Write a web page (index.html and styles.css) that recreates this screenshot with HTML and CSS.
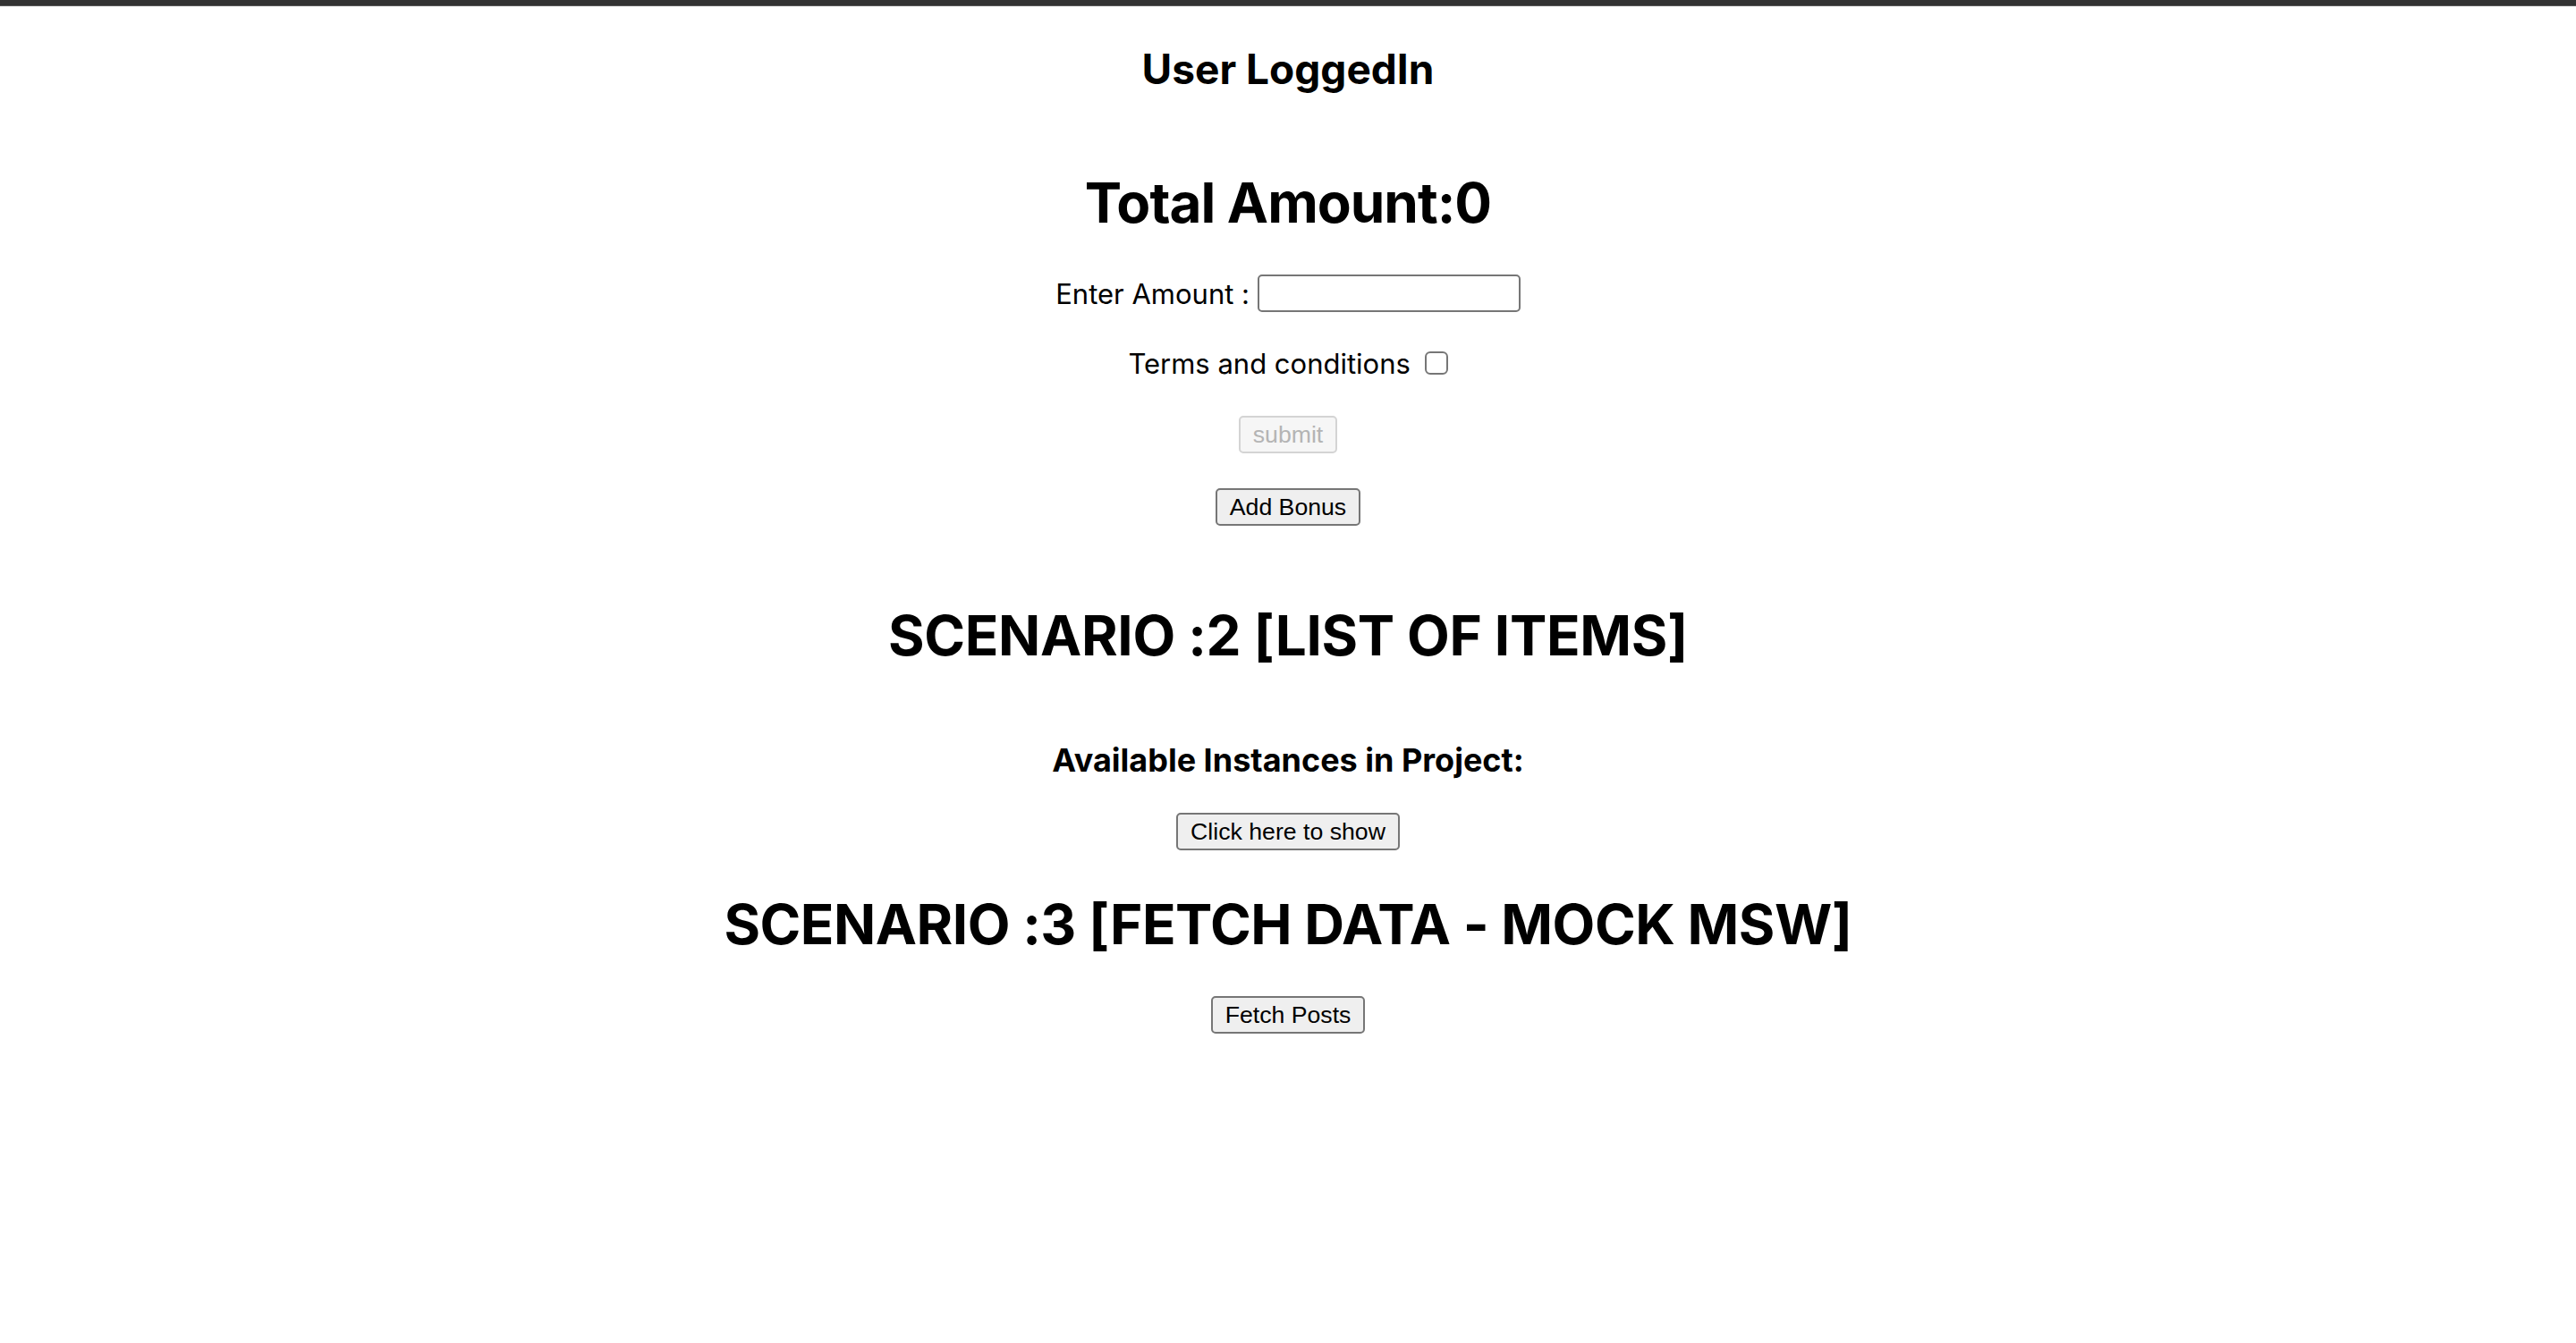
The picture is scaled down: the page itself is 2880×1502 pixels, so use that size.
FILE: index.html
```html
<!DOCTYPE html>
<html lang="en">
<head>
<meta charset="utf-8">
<title>App</title>
<link rel="stylesheet" href="styles.css">
</head>
<body>
<div class="topbar"></div>
<main class="app">
  <h2 class="user">User LoggedIn</h2>
  <h1 class="total">Total Amount:0</h1>
  <label class="row enter">Enter Amount : <input class="amount" type="text"></label>
  <label class="row terms">Terms and conditions <input class="check" type="checkbox"></label>
  <button class="btn submit" disabled>submit</button>
  <button class="btn bonus">Add Bonus</button>
  <h1 class="scenario s2">SCENARIO :2 [LIST OF ITEMS]</h1>
  <h3 class="instances">Available Instances in Project:</h3>
  <button class="btn show">Click here to show</button>
  <h1 class="scenario s3">SCENARIO :3 [FETCH DATA - MOCK MSW]</h1>
  <button class="btn fetch">Fetch Posts</button>
</main>
</body>
</html>
```
FILE: styles.css
```css
html, body {
  margin: 0;
  padding: 0;
  background: #ffffff;
}
body {
  font-family: Inter, "Liberation Sans", sans-serif;
  color: #000;
}
.topbar {
  height: 6px;
  background: #333333;
  border-bottom: 1px solid #5a5a5a;
}
.app {
  display: flex;
  flex-direction: column;
  align-items: center;
  text-align: center;
}
.user {
  margin: 42px 0 0;
  font-size: 46px;
  line-height: 56px;
  font-weight: 700;
}
.total {
  margin: 84px 0 0;
  font-size: 62px;
  line-height: 76px;
  font-weight: 700;
  letter-spacing: -1px;
}
.row {
  display: flex;
  align-items: center;
  font-size: 31px;
  white-space: pre;
}
.enter {
  margin-top: 42px;
  height: 42px;
}
.amount {
  box-sizing: border-box;
  width: 294px;
  height: 42px;
  margin: 0;
  border: 2px solid #767676;
  border-radius: 5px;
  padding: 2px 4px;
  font-size: 26px;
}
.terms {
  margin-top: 44px;
  height: 26px;
}
.check {
  appearance: none;
  -webkit-appearance: none;
  box-sizing: border-box;
  width: 26px;
  height: 26px;
  margin: 0 0 0 7px;
  border: 2px solid #767676;
  border-radius: 6px;
  background: #fff;
}
.btn {
  box-sizing: border-box;
  font-family: "Liberation Sans", Arial, sans-serif;
  font-size: 26.67px;
  line-height: 34px;
  padding: 2px 14px;
  border: 2px solid #767676;
  border-radius: 5px;
  background: #efefef;
  color: #000;
}
.submit {
  margin-top: 46px;
  color: #b4b4b4;
  border-color: #d4d4d4;
  background: #f6f6f6;
}
.bonus {
  margin-top: 39px;
}
.scenario {
  font-size: 62px;
  line-height: 76px;
  font-weight: 700;
  margin: 0;
}
.s2 {
  margin-top: 85px;
  letter-spacing: -0.35px;
}
.instances {
  margin: 79px 0 0;
  font-size: 36px;
  line-height: 44px;
  font-weight: 700;
}
.show {
  margin-top: 37px;
}
.s3 {
  margin-top: 45px;
  letter-spacing: -0.5px;
}
.fetch {
  margin-top: 42px;
}
```
